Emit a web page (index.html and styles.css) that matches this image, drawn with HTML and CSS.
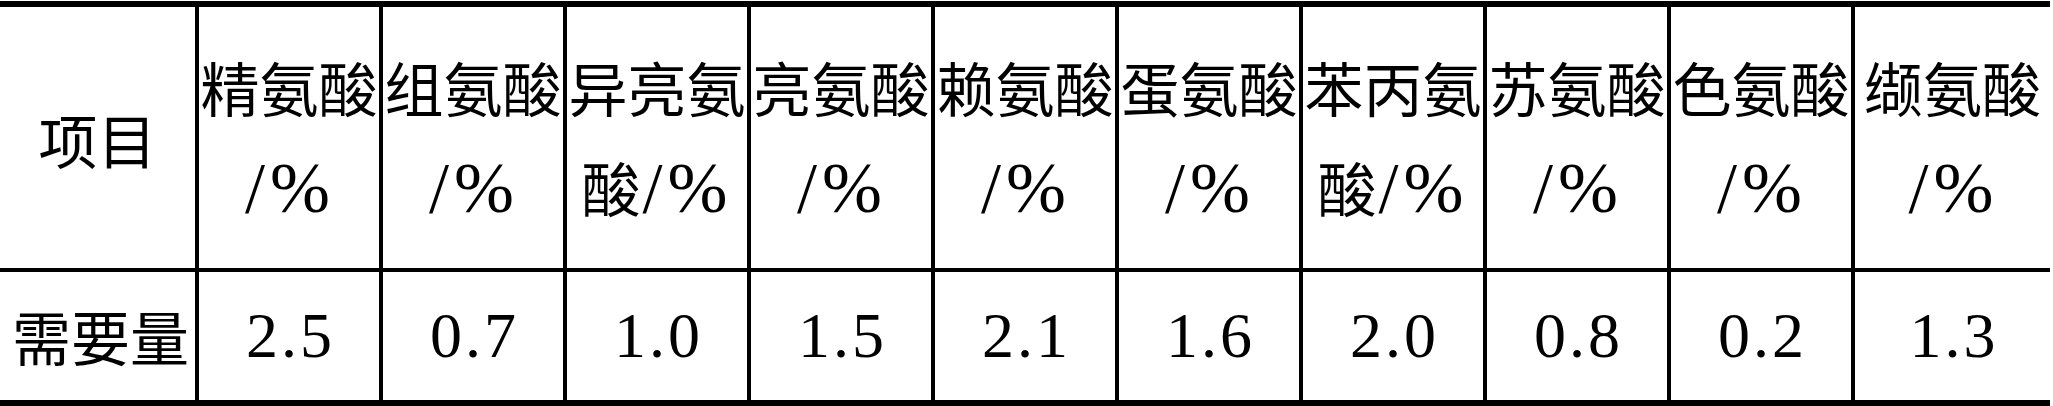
FILE: index.html
```html
<!DOCTYPE html>
<html lang="zh-CN">
<head>
<meta charset="utf-8">
<title>氨基酸需要量</title>
<link rel="stylesheet" href="styles.css">
</head>
<body>
<table class="aa-table">
  <colgroup>
    <col class="c-first">
    <col class="c-mid"><col class="c-mid"><col class="c-mid"><col class="c-mid"><col class="c-mid">
    <col class="c-mid"><col class="c-mid"><col class="c-mid"><col class="c-mid">
    <col class="c-last">
  </colgroup>
  <thead>
    <tr class="head-row">
      <th class="label">项目</th>
      <th>精氨酸<br><span class="unit">/%</span></th>
      <th>组氨酸<br><span class="unit">/%</span></th>
      <th>异亮氨<br>酸<span class="unit">/%</span></th>
      <th>亮氨酸<br><span class="unit">/%</span></th>
      <th>赖氨酸<br><span class="unit">/%</span></th>
      <th>蛋氨酸<br><span class="unit">/%</span></th>
      <th>苯丙氨<br>酸<span class="unit">/%</span></th>
      <th>苏氨酸<br><span class="unit">/%</span></th>
      <th>色氨酸<br><span class="unit">/%</span></th>
      <th class="end">缬氨酸<br><span class="unit">/%</span></th>
    </tr>
  </thead>
  <tbody>
    <tr class="body-row">
      <td class="label">需要量</td>
      <td class="num">2.5</td>
      <td class="num">0.7</td>
      <td class="num">1.0</td>
      <td class="num">1.5</td>
      <td class="num">2.1</td>
      <td class="num">1.6</td>
      <td class="num">2.0</td>
      <td class="num">0.8</td>
      <td class="num">0.2</td>
      <td class="num end">1.3</td>
    </tr>
  </tbody>
</table>
</body>
</html>
```

FILE: styles.css
```css
html, body {
  margin: 0;
  padding: 0;
  background: #ffffff;
}

body {
  padding-top: 1px;
}

.aa-table {
  width: 2050px;
  table-layout: fixed;
  border-collapse: separate;
  border-spacing: 0;
  border-top: 6px solid #000;
  border-bottom: 6px solid #000;
  color: #000;
  font-family: "Noto Sans CJK SC", sans-serif;
}

.c-first { width: 199px; }
.c-mid { width: 184px; }
.c-last { width: 195px; }

.aa-table th,
.aa-table td {
  padding: 0;
  text-align: center;
  vertical-align: middle;
  font-weight: normal;
  font-size: 59px;
  white-space: nowrap;
  border-right: 4px solid #000;
  box-sizing: border-box;
}

.aa-table th.end,
.aa-table td.end {
  border-right: none;
}

.head-row th {
  height: 265px;
  line-height: 100px;
  border-bottom: 4px solid #000;
}

.aa-table th.label {
  padding-top: 2px;
}

.body-row td {
  height: 128px;
  line-height: 100px;
}

.aa-table td.label {
  padding-left: 6px;
}

.unit {
  font-family: "Liberation Serif", "Times New Roman", serif;
  font-size: 72px;
  letter-spacing: 5px;
  padding-left: 2px;
}

.aa-table td.num {
  font-family: "Liberation Serif", "Times New Roman", serif;
  font-size: 64px;
  letter-spacing: 3px;
  padding-left: 3px;
}
```
